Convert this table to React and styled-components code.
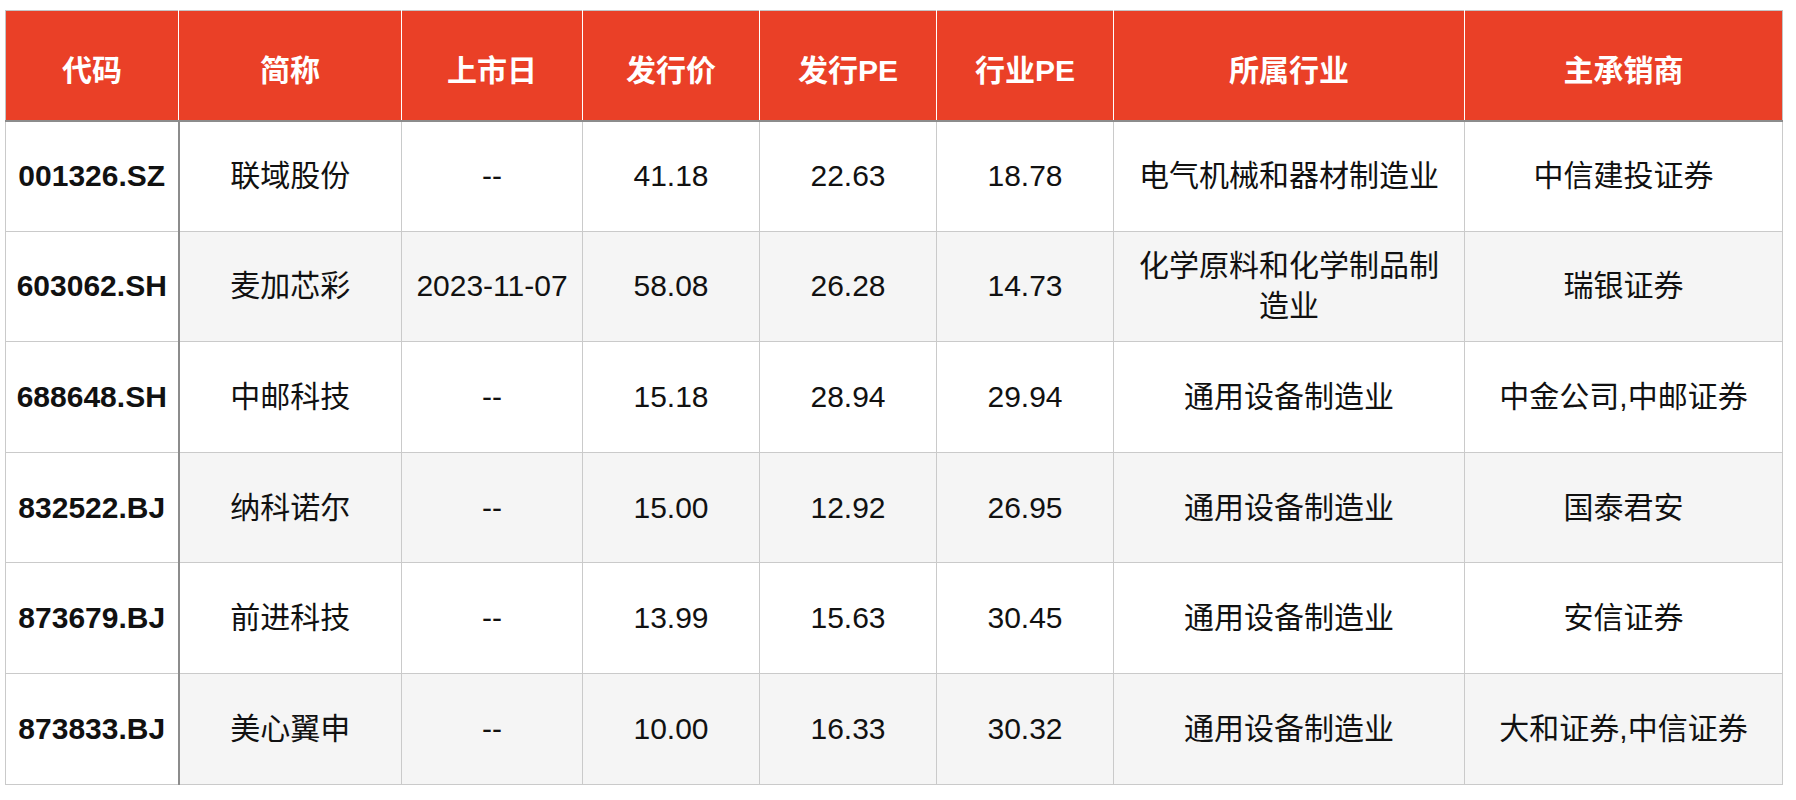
import React from "react";
import styled, { createGlobalStyle } from "styled-components";

const Global = createGlobalStyle`
  html, body { margin: 0; padding: 0; background: #fff; }
  body { font-family: "Liberation Sans", Arial, "Noto Sans CJK SC", sans-serif; }
`;

const Page = styled.div`
  padding: 10px 0 0 5px;
`;

const Table = styled.table`
  border-collapse: collapse;
  table-layout: fixed;
  width: 1777px;
  border: 1px solid #c4c4c4;
`;

const HeadCell = styled.th`
  box-sizing: border-box;
  background: #ea4027;
  color: #fff;
  font-size: 30px;
  font-weight: 700;
  height: 110px;
  padding: 6px 0 0;
  text-align: center;
  border-right: 1px solid #ffffff;
  border-bottom: 2px solid #8c8c8c;
  &:last-child { border-right: 1px solid #c4c4c4; }
`;

const Row = styled.tr`
  background: ${(p) => (p.$alt ? "#f5f5f5" : "#ffffff")};
`;

const Cell = styled.td`
  box-sizing: border-box;
  font-size: 30px;
  line-height: 40px;
  color: #111;
  text-align: center;
  height: 110.6px;
  padding: 0 ${(p) => (p.$wide ? "20px" : "4px")};
  white-space: ${(p) => (p.$wide ? "normal" : "nowrap")};
  border: 1px solid #cacaca;
`;

const CodeCell = styled(Cell)`
  background: #fff;
  font-weight: 700;
  padding: 0;
  border-right: 2px solid #8c8c8c;
`;

const widths = [173, 223, 181, 177, 177, 177, 351, 318];
const heads = ["代码", "简称", "上市日", "发行价", "发行PE", "行业PE", "所属行业", "主承销商"];
const rows = [
  ["001326.SZ", "联域股份", "--", "41.18", "22.63", "18.78", "电气机械和器材制造业", "中信建投证券"],
  ["603062.SH", "麦加芯彩", "2023-11-07", "58.08", "26.28", "14.73", "化学原料和化学制品制造业", "瑞银证券"],
  ["688648.SH", "中邮科技", "--", "15.18", "28.94", "29.94", "通用设备制造业", "中金公司,中邮证券"],
  ["832522.BJ", "纳科诺尔", "--", "15.00", "12.92", "26.95", "通用设备制造业", "国泰君安"],
  ["873679.BJ", "前进科技", "--", "13.99", "15.63", "30.45", "通用设备制造业", "安信证券"],
  ["873833.BJ", "美心翼申", "--", "10.00", "16.33", "30.32", "通用设备制造业", "大和证券,中信证券"],
];

export default function App() {
  return (
    <Page>
      <Global />
      <Table>
        <colgroup>
          {widths.map((w, i) => (
            <col key={i} style={{ width: w }} />
          ))}
        </colgroup>
        <thead>
          <tr>
            {heads.map((h) => (
              <HeadCell key={h}>{h}</HeadCell>
            ))}
          </tr>
        </thead>
        <tbody>
          {rows.map((r, i) => (
            <Row key={r[0]} $alt={i % 2 === 1}>
              <CodeCell>{r[0]}</CodeCell>
              {r.slice(1).map((c, j) => (
                <Cell key={j} $wide={j === 5}>{c}</Cell>
              ))}
            </Row>
          ))}
        </tbody>
      </Table>
    </Page>
  );
}
